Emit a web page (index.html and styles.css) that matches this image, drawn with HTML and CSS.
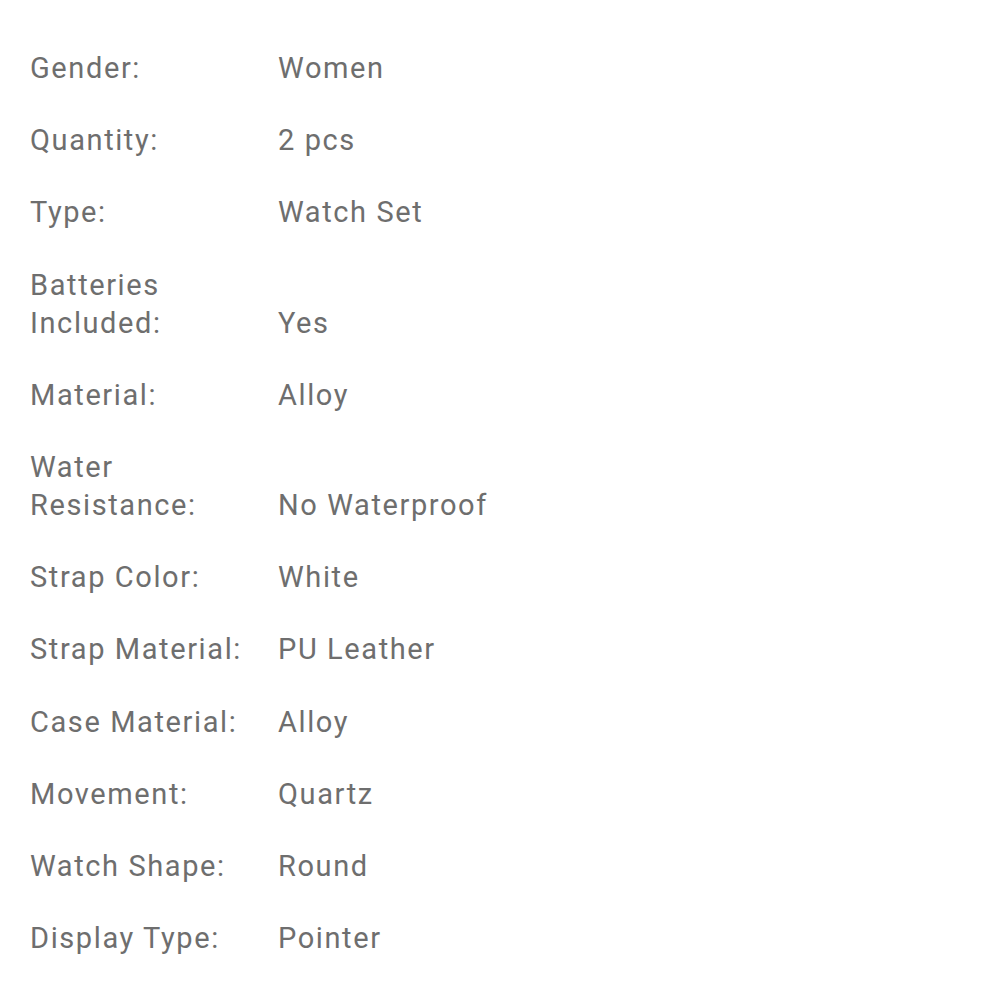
FILE: index.html
```html
<!DOCTYPE html>
<html>
<head>
<meta charset="utf-8">
<link rel="stylesheet" href="styles.css">
</head>
<body>
<div class="specs">
  <div class="row"><div class="label">Gender:</div><div class="value">Women</div></div>
  <div class="row"><div class="label">Quantity:</div><div class="value">2 pcs</div></div>
  <div class="row"><div class="label">Type:</div><div class="value">Watch Set</div></div>
  <div class="row"><div class="label">Batteries Included:</div><div class="value">Yes</div></div>
  <div class="row"><div class="label">Material:</div><div class="value">Alloy</div></div>
  <div class="row"><div class="label">Water Resistance:</div><div class="value">No Waterproof</div></div>
  <div class="row"><div class="label">Strap Color:</div><div class="value">White</div></div>
  <div class="row"><div class="label">Strap Material:</div><div class="value">PU Leather</div></div>
  <div class="row"><div class="label">Case Material:</div><div class="value">Alloy</div></div>
  <div class="row"><div class="label">Movement:</div><div class="value">Quartz</div></div>
  <div class="row"><div class="label">Watch Shape:</div><div class="value">Round</div></div>
  <div class="row"><div class="label">Display Type:</div><div class="value">Pointer</div></div>
</div>
</body>
</html>
```
FILE: styles.css
```css
html, body {
  margin: 0;
  padding: 0;
  background: #ffffff;
}
body {
  font-family: Roboto, "Liberation Sans", sans-serif;
  color: #6e6e6e;
  font-size: 29px;
  line-height: 38px;
  letter-spacing: 1.6px;
}
.specs {
  display: flex;
  flex-direction: column;
  padding: 32px 0 0 30px;
}
.row {
  display: flex;
  align-items: flex-end;
  padding: 17.1px 0;
}
.label {
  width: 248px;
  flex: none;
  padding-right: 8px;
  box-sizing: border-box;
}
.value {
  flex: 1;
}
```
